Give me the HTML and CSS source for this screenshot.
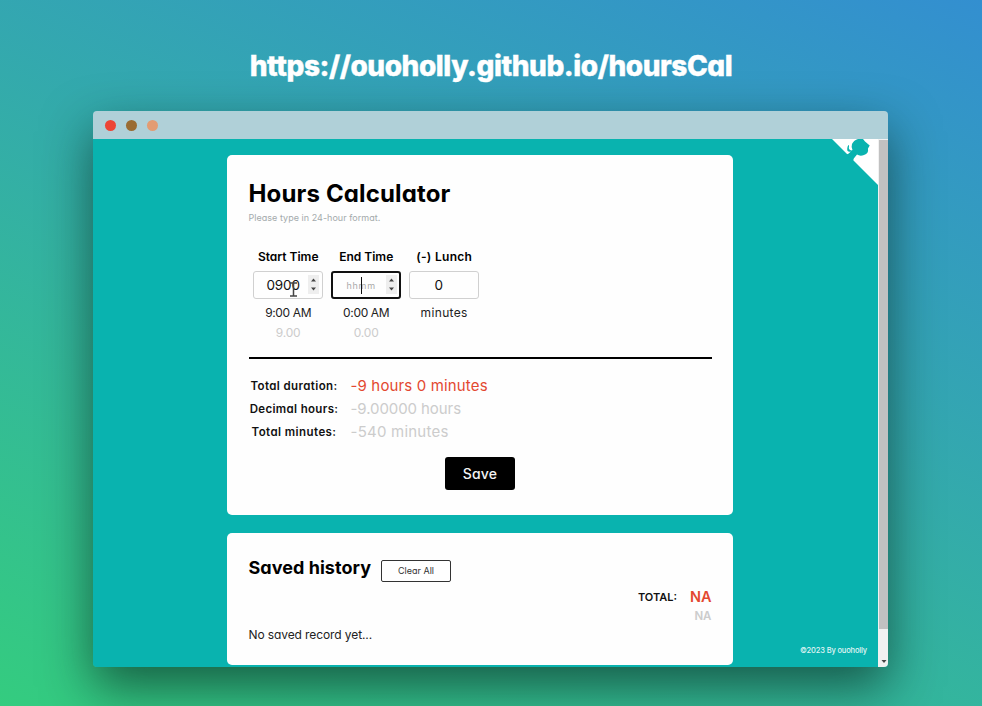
FILE: index.html
```html
<!DOCTYPE html>
<html lang="en">
<head>
<meta charset="utf-8">
<title>Hours Calculator</title>
<link rel="stylesheet" href="styles.css">
</head>
<body>
<h1 class="url"><span>https://ouoholly.github.io/hoursCal</span></h1>
<div class="window">
  <div class="titlebar"><i class="dot red"></i><i class="dot brown"></i><i class="dot tan"></i></div>
  <div class="viewport">
    <main class="page">
      <section class="card calc">
        <h2><span>Hours Calculator</span></h2>
        <p class="hint"><span>Please type in 24-hour format.</span></p>
        <div class="fields">
          <div class="field">
            <label class="l1">Start Time</label>
            <div class="box"><span class="num">0900</span><svg class="spin" viewBox="0 0 11 19"><path d="M3 6.5 5.5 3.5 8 6.500zM3 12.500h5L5.500 15.500z"/></svg>
              <svg class="ibeam" viewBox="0 0 9 15"><path d="M1 1h7M1 14h7M4.500 1v13" /></svg></div>
            <span class="clock">9:00 AM</span><span class="dec">9.00</span>
          </div>
          <div class="field">
            <label class="l2">End Time</label>
            <div class="box focus"><span class="placeholder">hhmm</span><i class="caret"></i><svg class="spin" viewBox="0 0 11 19"><path d="M3 6.5 5.5 3.5 8 6.500zM3 12.500h5L5.500 15.500z"/></svg></div>
            <span class="clock">0:00 AM</span><span class="dec">0.00</span>
          </div>
          <div class="field">
            <label class="l3">(-) Lunch</label>
            <div class="box"><span class="num lunch">0</span></div>
            <span class="clock mins">minutes</span>
          </div>
        </div>
        <hr>
        <dl class="results">
          <dt class="r1">Total duration:</dt><dd class="accent v1">-9 hours 0 minutes</dd>
          <dt class="r2">Decimal hours:</dt><dd class="v2">-9.00000 hours</dd>
          <dt class="r3">Total minutes:</dt><dd class="v3">-540 minutes</dd>
        </dl>
        <button class="save"><span>Save</span></button>
      </section>
      <section class="card history">
        <div class="head"><h3>Saved history</h3><button class="clear"><span>Clear All</span></button></div>
        <div class="total"><span class="tl">TOTAL:</span><span class="na">NA</span></div>
        <div class="na2">NA</div>
        <p class="empty"><span>No saved record yet...</span></p>
      </section>
    </main>
    <svg class="corner" viewBox="0 0 46 46"><path fill="#fff" d="M0 0h46v46z"/><path fill="#09b3af" d="M14 15.500L16 15l3-2.500q-4 1-3.800-2.500 0-2.500 1.300-4 .8 0 .5 1.200-.8 3.800 2.500 4.300l1-.5q-1.500-3-.5-6Q22 1 26 0h5l2 2.500L37.700 6.500 36 9.500q.8 5-4 6.500-4 1.500-7-.5l-3.200 4L21 22z"/></svg>
    <footer>©2023 By ouoholly</footer>
    <div class="scrollbar"><i class="thumb"></i><svg viewBox="0 0 10 10"><path d="M3.500 3h5L6 6z"/></svg></div>
  </div>
</div>
</body>
</html>
```
FILE: styles.css
```css
* { box-sizing: border-box; }
body { margin: 0; height: 706px; overflow: hidden; font-family: Inter, "Liberation Sans", sans-serif; font-feature-settings: "cv11"; color: #111; background: linear-gradient(24deg, #34cc7f, #338fd0); }
h1, h2, h3, p, dl, dd, hr { margin: 0; }
button { font: inherit; padding: 0; }
.url { height: 111px; padding-top: 47px; text-align: center; color: #fff; font-size: 28px; line-height: 38px; font-weight: 800; letter-spacing: -.44px; -webkit-text-stroke: .4px #fff; }
.window { width: 795px; height: 556px; margin-left: 93px; border-radius: 4px; overflow: hidden; box-shadow: 0 20px 50px rgba(8, 40, 30, .65); }
.titlebar { height: 28px; background: #b0d0d8; display: flex; align-items: center; gap: 10px; padding: 1px 0 0 12px; }
.dot { width: 11px; height: 11px; border-radius: 50%; }
.red { background: #ed4536; }
.brown { background: #9a6c33; }
.tan { background: #e39c73; }
.viewport { position: relative; height: 528px; background: #09b3af; display: flex; }
.page { width: 506px; margin: 16px 0 0 134px; }
.card { background: #fefefe; border-radius: 5px; padding: 0 21.500px; }
.calc { height: 360px; padding-top: 22px; }
h2 { font-size: 24px; line-height: 34px; letter-spacing: .15px; color: #000; }
.hint { font-size: 9px; line-height: 14px; letter-spacing: .03px; color: #a4aaac; }
.fields { display: flex; gap: 8px; margin: 23px 0 0 4.700px; }
.field { width: 70px; display: flex; flex-direction: column; align-items: center; white-space: nowrap; }
.field label { font-size: 12px; line-height: 18px; font-weight: 600; color: #000; }
.l3 { letter-spacing: .3px; }
.box { position: relative; width: 70px; height: 28px; margin-top: 5px; border: 1px solid #d0d0d0; border-radius: 3px; display: flex; align-items: center; justify-content: center; }
.focus { border: 2px solid #111; }
.num { font-size: 13.500px; line-height: 18px; padding-right: 10px; margin-top: -1px; letter-spacing: -.1px; }
.placeholder { font-size: 9px; color: #aaa; padding-right: 10px; letter-spacing: .7px; }
.lunch { padding-right: 11px; }
.spin { position: absolute; right: 3px; top: 50%; margin-top: -10px; width: 11px; height: 19px; background: #eee; fill: #444; }
.focus .spin { right: 2px; }
.caret { position: absolute; left: 28px; top: 4px; width: 1px; height: 17px; background: #111; }
.ibeam { position: absolute; left: 35px; top: 10px; width: 9px; height: 15px; fill: none; stroke: #444; stroke-width: 1.5; }
.clock { font-size: 12px; line-height: 20px; margin-top: 4px; letter-spacing: -.35px; color: #222; }
.mins { letter-spacing: .35px; }
.dec { font-size: 12px; line-height: 18px; height: 18px; padding-top: 1px; letter-spacing: -.2px; color: #ccc; }
hr { border: 0; height: 2px; background: #000; margin-top: 16px; }
.results { display: grid; grid-template-columns: 91px 1fr; column-gap: 11px; margin-top: 15px; grid-auto-rows: 23.200px; align-items: center; }
dt { font-size: 11.500px; font-weight: 600; text-align: center; white-space: nowrap; }
.r1 { letter-spacing: .4px; }
.r2 { letter-spacing: .34px; }
.r3 { letter-spacing: .43px; }
dd { font-size: 15px; color: #ccc; }
.accent { color: #e34830; }
.v1 { letter-spacing: .15px; }
.v2 { letter-spacing: -.08px; }
.v3 { letter-spacing: .23px; }
.save { display: block; width: 70px; height: 33px; margin: 13.400px auto 0; border: 0; border-radius: 3px; background: #000; color: #f3f3f3; font-size: 14px; font-weight: 500; letter-spacing: .2px; }
.history { height: 132px; margin-top: 18px; padding-top: 21px; }
.head { display: flex; height: 28px; }
h3 { width: 132.500px; font-size: 18px; line-height: 28px; letter-spacing: .04px; color: #000; white-space: nowrap; }
.clear { width: 70px; height: 22px; margin-top: 6px; border: 1px solid #333; border-radius: 2px; background: #fff; color: #333; font-size: 9px; line-height: 20px; }
.total { display: flex; justify-content: flex-end; align-items: center; height: 20px; margin-top: 4px; gap: 13px; }
.tl { font-size: 11px; font-weight: 600; padding-top: 2px; }
.na { font-size: 14.500px; font-weight: 600; color: #e34830; }
.na2 { text-align: right; font-size: 11.500px; font-weight: 600; line-height: 20px; color: #ccc; }
.empty { font-size: 12px; line-height: 17px; letter-spacing: -.1px; color: #222; }
.corner { position: absolute; left: 739px; top: 0; width: 46px; height: 46px; }
footer { position: absolute; right: 21px; bottom: 11px; font-size: 7.500px; line-height: 10px; font-weight: 500; letter-spacing: -.15px; color: #e0f5f5; }
.scrollbar { width: 10px; height: 528px; margin-left: auto; background: #f1f1f1; display: flex; flex-direction: column; justify-content: space-between; align-items: flex-end; }
.thumb { width: 9px; height: 489px; margin-top: 1px; background: #c1c1c1; }
.scrollbar svg { width: 10px; height: 10px; fill: #444; }
```
